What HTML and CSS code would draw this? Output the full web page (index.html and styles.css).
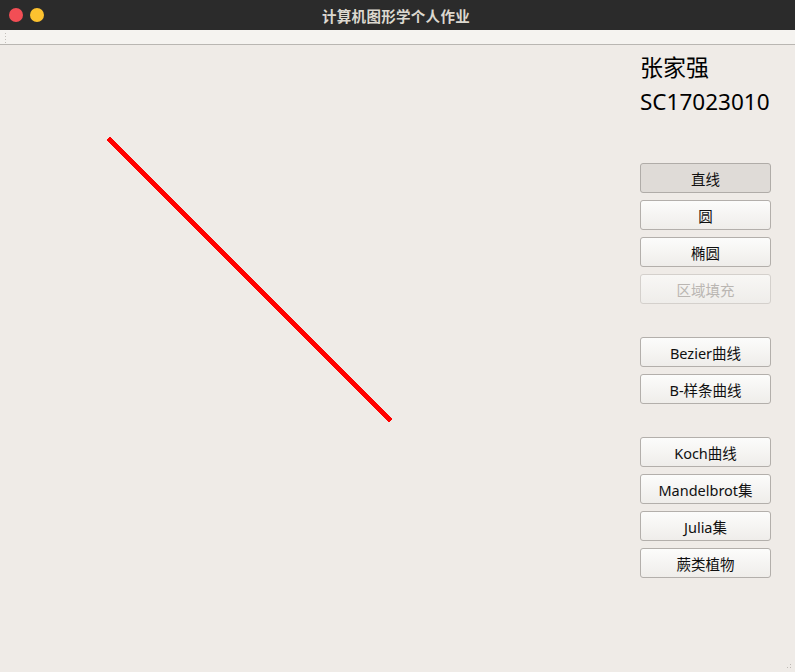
FILE: index.html
```html
<!DOCTYPE html>
<html lang="zh">
<head>
<meta charset="utf-8">
<title>计算机图形学个人作业</title>
<link rel="stylesheet" href="styles.css">
</head>
<body>
<div class="window">
  <header class="titlebar">
    <div class="lights">
      <span class="light red"></span>
      <span class="light yellow"></span>
    </div>
    <div class="title">计算机图形学个人作业</div>
  </header>
  <div class="toolbar"><span class="grip"></span></div>
  <main class="main">
    <section class="canvas">
      <svg class="drawing" width="630" height="627" viewBox="0 0 630 627">
        <line x1="110" y1="95" x2="389" y2="374" stroke="#ff0000" stroke-width="4.5" stroke-linecap="square" shape-rendering="crispEdges"/>
      </svg>
    </section>
    <aside class="panel">
      <div class="name">张家强</div>
      <div class="sid">SC17023010</div>
      <div class="group">
        <button class="btn active">直线</button>
        <button class="btn">圆</button>
        <button class="btn">椭圆</button>
        <button class="btn" disabled>区域填充</button>
      </div>
      <div class="group">
        <button class="btn">Bezier曲线</button>
        <button class="btn">B-样条曲线</button>
      </div>
      <div class="group">
        <button class="btn">Koch曲线</button>
        <button class="btn">Mandelbrot集</button>
        <button class="btn">Julia集</button>
        <button class="btn">蕨类植物</button>
      </div>
    </aside>
  </main>
  <span class="sizegrip"></span>
</div>
</body>
</html>
```
FILE: styles.css
```css
* { box-sizing: border-box; }
html, body { margin: 0; padding: 0; }
body {
  width: 795px;
  height: 672px;
  overflow: hidden;
  background: #efebe7;
  font-family: "Noto Sans", "Noto Sans CJK SC", sans-serif;
}
.window {
  position: relative;
  width: 795px;
  height: 672px;
  display: flex;
  flex-direction: column;
}
.titlebar {
  height: 30px;
  background: #2b2b2b;
  position: relative;
  display: flex;
  align-items: center;
  justify-content: center;
}
.lights {
  position: absolute;
  left: 9px;
  top: 8px;
  display: flex;
  gap: 7px;
}
.light {
  width: 14px;
  height: 14px;
  border-radius: 50%;
  display: block;
}
.red { background: #f24e55; }
.yellow { background: #fdc22f; }
.title {
  color: #dcd8cf;
  font-weight: bold;
  font-size: 14.5px;
  font-family: "Noto Sans CJK SC", sans-serif;
  letter-spacing: 0.3px;
  margin-left: -3px;
}
.toolbar {
  height: 15px;
  background: #f5f3f0;
  border-bottom: 1px solid #b9b6b2;
  position: relative;
}
.grip {
  position: absolute;
  left: 4px;
  top: 2px;
  width: 4px;
  height: 11px;
  background-image: radial-gradient(circle, #c4c0bb 0.8px, transparent 1px);
  background-size: 3px 3px;
}
.main {
  flex: 1;
  display: flex;
}
.canvas {
  width: 632px;
  position: relative;
}
.drawing { display: block; }
.panel {
  padding-left: 8px;
  display: flex;
  flex-direction: column;
}
.name {
  font-family: "Noto Sans CJK SC", sans-serif;
  font-size: 23px;
  line-height: 28px;
  margin-top: 7px;
  color: #000;
}
.sid {
  font-family: "Noto Sans", sans-serif;
  font-size: 22.5px;
  line-height: 30px;
  margin-top: 7px;
  color: #000;
}
.group {
  display: flex;
  flex-direction: column;
  gap: 7px;
}
.sid + .group { margin-top: 46px; }
.group + .group { margin-top: 33px; }
.btn {
  width: 131px;
  height: 30px;
  border: 1px solid #b3afab;
  border-radius: 3px;
  background: linear-gradient(#fcfcfb, #efedea);
  font-family: "Noto Sans", "Noto Sans CJK SC", sans-serif;
  font-size: 14.5px;
  color: #101010;
  padding: 0;
  display: flex;
  align-items: center;
  justify-content: center;
}
.btn.active {
  background: #dfdbd7;
  border-color: #b0aca8;
}
.btn:disabled {
  color: #bab6b2;
  border-color: #d4d0cc;
  background: linear-gradient(#f8f7f5, #efedea);
}
.sizegrip {
  position: absolute;
  right: 2px;
  bottom: 2px;
  width: 10px;
  height: 10px;
  background-image: radial-gradient(circle, #bdb9b4 0.8px, transparent 1px);
  background-size: 3px 3px;
  clip-path: polygon(100% 0, 100% 100%, 0 100%);
}
```
